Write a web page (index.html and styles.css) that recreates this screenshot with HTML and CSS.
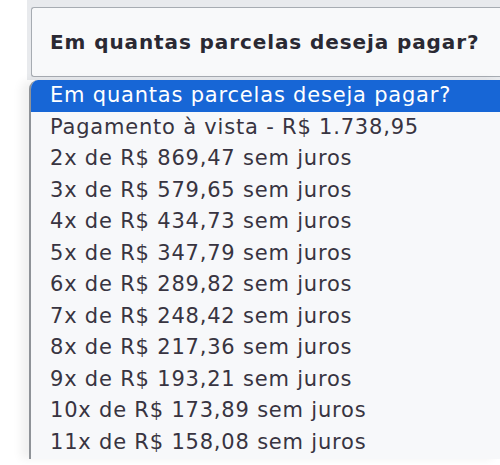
FILE: index.html
```html
<!DOCTYPE html>
<html>
<head>
    <meta name="viewport" content="width=device-width, initial-scale=1.0">
    <title>Parcelas</title>
    <link rel="stylesheet" href="styles.css">
</head>
<body>
    <div class="frame">
        <div class="select-box">Em quantas parcelas deseja pagar?</div>
    </div>
    <ul class="options">
        <li class="option selected">Em quantas parcelas deseja pagar?</li>
        <li class="option">Pagamento à vista - R$ 1.738,95</li>
        <li class="option">2x de R$ 869,47 sem juros</li>
        <li class="option">3x de R$ 579,65 sem juros</li>
        <li class="option">4x de R$ 434,73 sem juros</li>
        <li class="option">5x de R$ 347,79 sem juros</li>
        <li class="option">6x de R$ 289,82 sem juros</li>
        <li class="option">7x de R$ 248,42 sem juros</li>
        <li class="option">8x de R$ 217,36 sem juros</li>
        <li class="option">9x de R$ 193,21 sem juros</li>
        <li class="option">10x de R$ 173,89 sem juros</li>
        <li class="option">11x de R$ 158,08 sem juros</li>
    </ul>
</body>
</html>
```

FILE: styles.css
```css
* {
    box-sizing: border-box;
}

html, body {
    height: 100%;
}

body {
    margin: 0;
    background: #ffffff;
    font-family: "DejaVu Sans", Verdana, sans-serif;
    color: #383441;
    overflow: hidden;
}

.frame {
    margin-left: 27px;
    padding: 7px 0 3px 4px;
    background: #e8eaed;
}

.select-box {
    height: 70px;
    display: flex;
    align-items: center;
    padding-left: 18px;
    border: 1px solid #a7acb2;
    border-right: none;
    border-radius: 3px 0 0 3px;
    background: #f8f9fa;
    font-size: 20px;
    font-weight: 700;
    letter-spacing: 0.9px;
    color: #2a2933;
    white-space: nowrap;
    overflow: hidden;
}

.options {
    list-style: none;
    margin: 0 0 0 29px;
    padding: 0;
    background: #f7f8fa;
    border-left: 2px solid #8f9398;
    border-top-left-radius: 9px;
    box-shadow: -8px 0 10px rgba(0, 0, 0, 0.06);
    overflow: hidden;
}

.option {
    height: 31.56px;
    line-height: 31.56px;
    padding-left: 19px;
    font-size: 21px;
    letter-spacing: 0.8px;
    white-space: nowrap;
}

.option.selected {
    background: #1766d6;
    color: #ffffff;
}
```
